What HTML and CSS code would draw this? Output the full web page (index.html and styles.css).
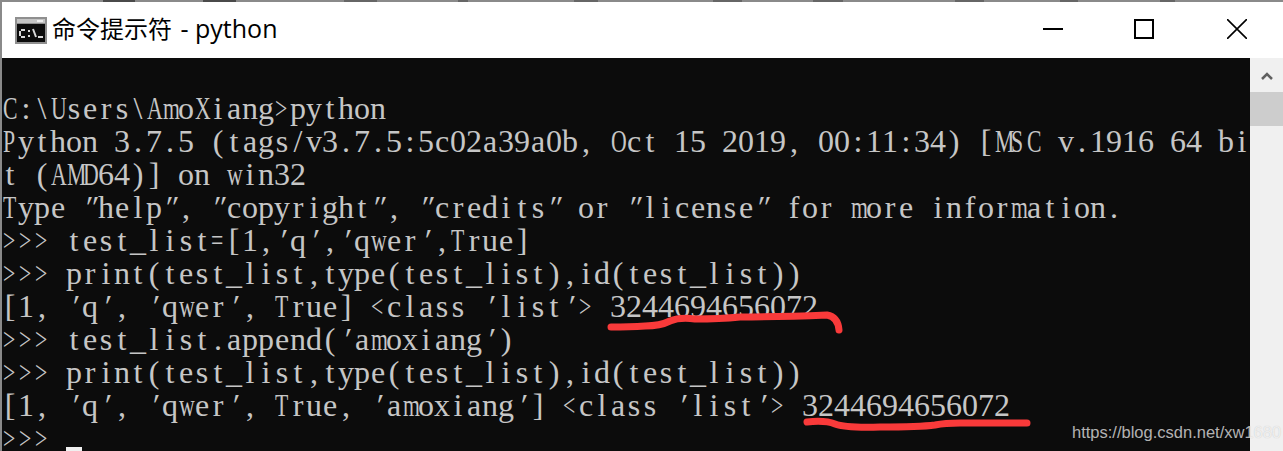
FILE: index.html
```html
<!DOCTYPE html>
<html lang="en">
<head>
    <meta charset="UTF-8">
    <title>命令提示符 - python</title>
    <link rel="stylesheet" href="styles.css">
</head>
<body>
    <div class="window">
        <svg class="top-strip" width="1283" height="2" viewBox="0 0 1283 2">
            <path d="M103 0h32v2h-32zM203 0h33v2h-33z" fill="#4a4a4a"/>
            <path d="M344 0h33v2h-33zM458 0h10v2h-10zM574 0h24v2h-24zM713 0h29v2h-29zM813 0h30v2h-30zM955 0h29v2h-29zM1060 0h18v2h-18zM1160 0h15v2h-15z" fill="#666"/>
        </svg>
        <div class="titlebar">
            <svg class="app-icon" width="32" height="27" viewBox="0 0 32 27">
                <rect width="32" height="27" fill="#8f8f8f"/>
                <rect x="2" y="2" width="28" height="4" fill="#c4c4c4"/>
                <rect x="2" y="7" width="28" height="18" fill="#0c0c0c"/>
                <rect x="22" y="3" width="6" height="2" fill="#eee"/>
                <path d="M6 13h4M5 14v5M6 20h4M13 14h2M13 19h2M18 12l3 8M23 20h5" stroke="#d8d8d8" stroke-width="2" fill="none"/>
            </svg>
            <span class="title">命令提示符<span class="title-latin"> - python</span></span>
            <div class="controls">
                <svg class="ctl" width="20" height="20" viewBox="0 0 20 20"><path d="M0 10h20" stroke="#000" stroke-width="2"/></svg>
                <svg class="ctl max" width="20" height="20" viewBox="0 0 20 20"><rect x="1" y="1" width="18" height="18" fill="none" stroke="#000" stroke-width="2"/></svg>
                <svg class="ctl close" width="20" height="20" viewBox="0 0 20 20"><path d="M0 0l20 20M20 0L0 20" stroke="#000" stroke-width="1.6"/></svg>
            </div>
        </div>
        <div class="body">
            <div class="console">
                <div class="line"></div>
                <div class="line">C:\Users\AmoXiang&gt;python</div>
                <div class="line">Python 3.7.5 (tags/v3.7.5:5c02a39a0b, Oct 15 2019, 00:11:34) [MSC v.1916 64 bi</div>
                <div class="line">t (AMD64)] on win32</div>
                <div class="line">Type "help", "copyright", "credits" or "license" for more information.</div>
                <div class="line">&gt;&gt;&gt; test_list=[1,'q','qwer',True]</div>
                <div class="line">&gt;&gt;&gt; print(test_list,type(test_list),id(test_list))</div>
                <div class="line">[1, 'q', 'qwer', True] &lt;class 'list'&gt; 3244694656072</div>
                <div class="line">&gt;&gt;&gt; test_list.append('amoxiang')</div>
                <div class="line">&gt;&gt;&gt; print(test_list,type(test_list),id(test_list))</div>
                <div class="line">[1, 'q', 'qwer', True, 'amoxiang'] &lt;class 'list'&gt; 3244694656072</div>
                <div class="line">&gt;&gt;&gt; <span class="cursor"></span></div>
                <svg class="scribble" width="1250" height="393" viewBox="2 0 1250 393">
                    <path d="M611 269Q630 269 645 268Q660 268 670 263Q680 259 695 261Q720 261 740 259Q780 259 827 257Q838 259 839 272"/>
                    <path d="M807 364Q825 362 835 366Q845 370 880 369Q920 369 935 367Q945 365 960 365L1027 365"/>
                </svg>
            </div>
            <div class="scrollbar">
                <div class="arrow">
                    <svg width="12" height="9" viewBox="0 0 12 9"><path d="M1 8l5-5 5 5" fill="none" stroke="#606060" stroke-width="2.5"/></svg>
                </div>
                <div class="thumb"></div>
            </div>
            <span class="watermark">https://blog.csdn.net/xw1680</span>
        </div>
    </div>
    <script>
        // Console font is fixed width, so put each char in its own cell
        const narrow = 'ABCDEFGHIJKLMNOPQRSTUVWXYZmw<>=';
        document.querySelectorAll('.line').forEach(line => {
            Array.from(line.childNodes).forEach(node => {
                if (node.nodeType !== 3) return;
                const frag = document.createDocumentFragment();
                for (const ch of node.textContent) {
                    const cell = document.createElement('span');
                    cell.className = 'cell';
                    if (narrow.includes(ch)) cell.classList.add('narrow');
                    if (ch === "'" || ch === '"') cell.classList.add('quote');
                    cell.textContent = ch;
                    frag.appendChild(cell);
                }
                line.replaceChild(frag, node);
            });
        });
    </script>
</body>
</html>
```

FILE: styles.css
```css
html, body {
    margin: 0;
    height: 100%;
    overflow: hidden;
}
.window {
    height: 451px;
    box-sizing: border-box;
    border-left: 2px solid #8a8a8a;
    display: flex;
    flex-direction: column;
    background-color: #fff;
    position: relative;
}
.top-strip {
    display: block;
    flex-shrink: 0;
    margin-left: -2px;
    background-color: #8a8a8a;
}
.titlebar {
    height: 56px;
    flex-shrink: 0;
    display: flex;
    align-items: center;
    padding-left: 13px;
    color: #000;
}
.app-icon {
    margin-right: 5px;
}
.title {
    font-family: "Open Sans", "Noto Sans CJK SC", sans-serif;
    font-size: 24px;
    margin-bottom: 5px;
}
.title-latin {
    font-size: 25px;
    margin-left: 2px;
}
.controls {
    margin-left: auto;
    margin-bottom: 2px;
    display: flex;
    padding-right: 36px;
}
.ctl.max {
    margin-left: 71px;
}
.ctl.close {
    margin-left: 73px;
}
.body {
    flex: 1;
    display: flex;
    min-height: 0;
    position: relative;
}
.console {
    flex: 1;
    position: relative;
    background-color: #0c0c0c;
    color: #c6c6c6;
    font-family: "Liberation Serif", serif;
    font-size: 32px;
    padding-top: 2px;
    overflow: hidden;
}
.line {
    height: 33px;
    box-sizing: border-box;
    padding: 3px 0 6px;
    line-height: 24px;
    white-space: pre;
}
.cell {
    display: inline-block;
    width: 16px;
    text-align: center;
}
.cell.narrow {
    transform: translateX(-1.5px) scaleX(0.68);
}
.cell.quote {
    transform: skewX(-18deg);
}
.cursor {
    display: inline-block;
    width: 16px;
    height: 4px;
    background-color: #f0f0f0;
    vertical-align: top;
    margin-top: 21px;
}
.scribble {
    position: absolute;
    left: 0;
    top: 0;
}
.scribble path {
    fill: none;
    stroke: #f93a3a;
    stroke-width: 7;
    stroke-linecap: round;
    stroke-linejoin: round;
}
.watermark {
    position: absolute;
    left: 1070px;
    top: 365px;
    font-family: "Liberation Sans", sans-serif;
    font-size: 16.5px;
    color: rgba(255, 255, 255, 0.7);
    text-shadow: 0 0 1px rgba(0, 0, 0, 0.2);
    white-space: nowrap;
}
.scrollbar {
    width: 33px;
    flex-shrink: 0;
    background-color: #f0f0f0;
}
.arrow {
    height: 34px;
    display: flex;
    align-items: center;
    justify-content: center;
}
.thumb {
    height: 34px;
    background-color: #cdcdcd;
}
```
